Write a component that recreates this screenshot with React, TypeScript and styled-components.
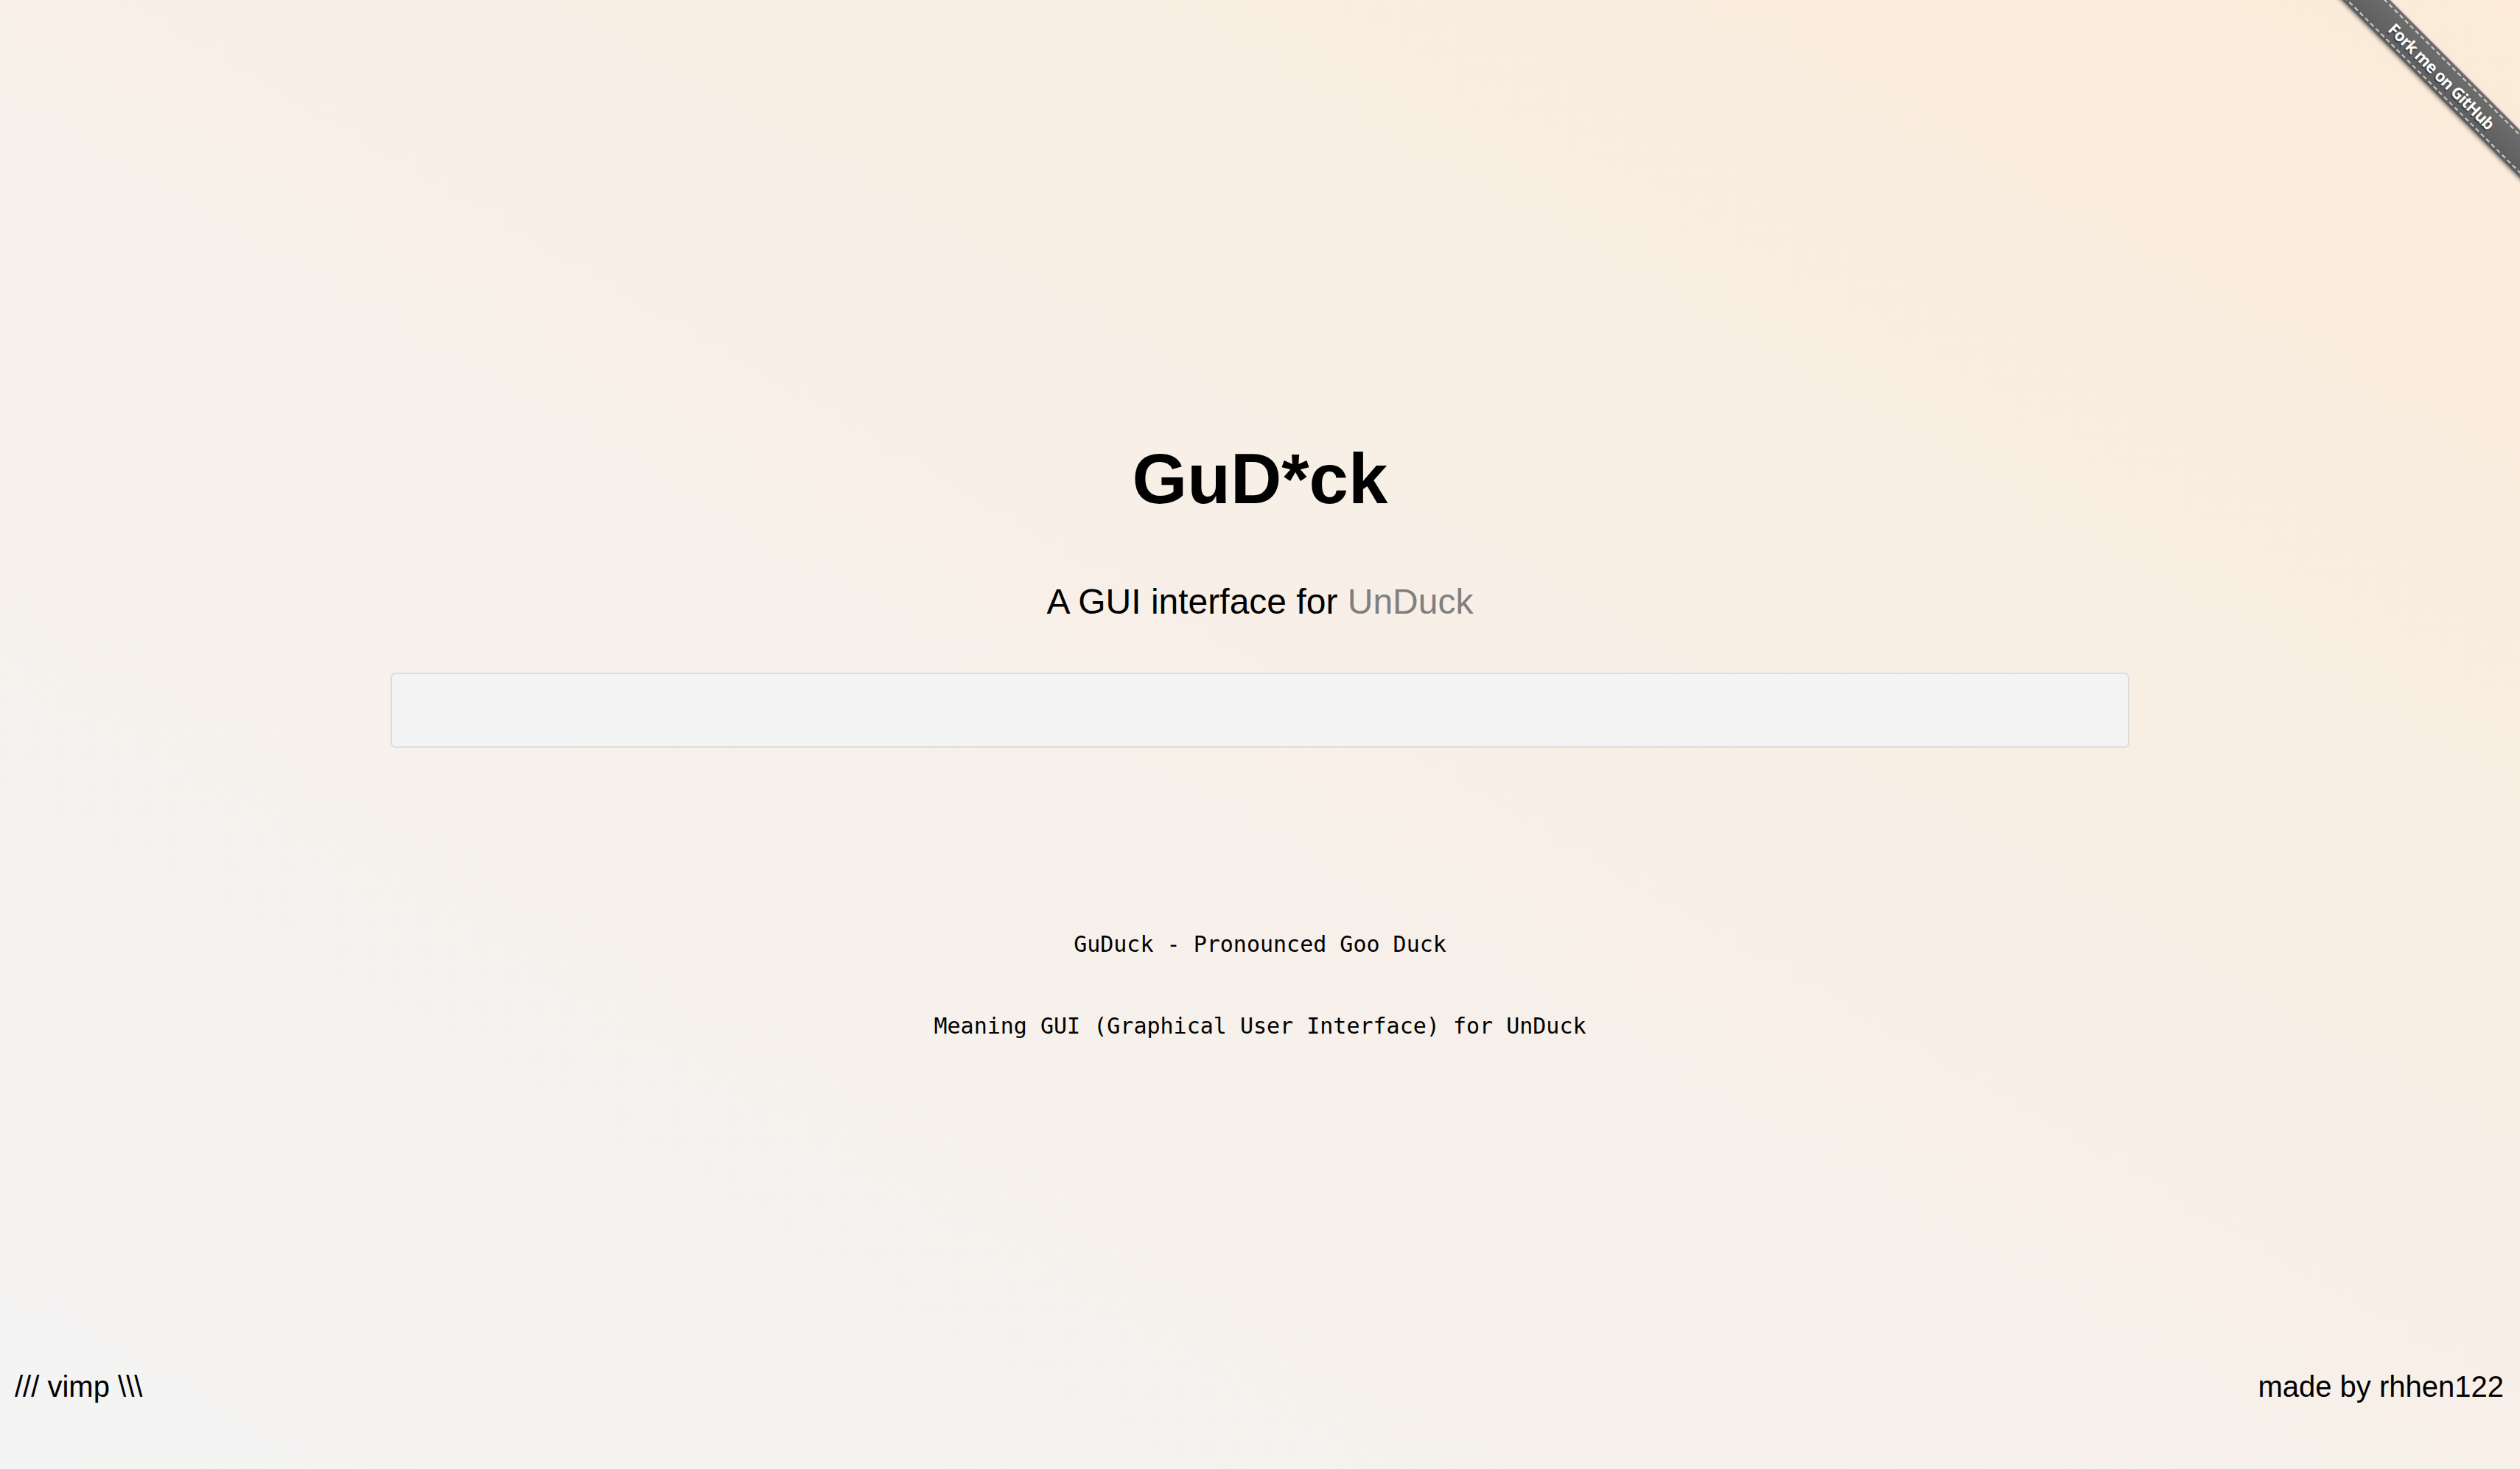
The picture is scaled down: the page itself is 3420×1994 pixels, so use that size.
import React from 'react';
import styled, { createGlobalStyle } from 'styled-components';

const GlobalStyle = createGlobalStyle`
  html, body {
    margin: 0;
    padding: 0;
  }
  body {
    font-family: "Liberation Sans", Arial, Helvetica, sans-serif;
    color: #000;
    background: linear-gradient(to top right, #f4f4f4 0%, #f7f0ea 45%, #f8eee3 70%, #fbebd8 100%);
    min-height: 100vh;
  }
`;

const Page = styled.div`
  min-height: 100vh;
  display: flex;
  flex-direction: column;
  position: relative;
  overflow: hidden;
`;

const Main = styled.main`
  flex: 1;
  display: flex;
  flex-direction: column;
  align-items: center;
  padding-top: 602px;
`;

const Title = styled.h1`
  margin: 0;
  font-size: 96px;
  line-height: 96px;
  font-weight: 700;
`;

const Subtitle = styled.p`
  margin: 95px 0 0;
  font-size: 48px;
  line-height: 48px;
`;

const Link = styled.a`
  color: #808080;
  text-decoration: none;
`;

const Search = styled.input`
  margin-top: 72px;
  width: 2360px;
  height: 102px;
  box-sizing: border-box;
  border: 2px solid #dcdcdc;
  border-radius: 7px;
  background: #f4f4f4;
  font-size: 40px;
  padding: 0 24px;
  outline: none;
  font-family: inherit;
`;

const Note = styled.p<{ $gap: number }>`
  margin: ${(p) => p.$gap}px 0 0;
  font-family: "DejaVu Sans Mono", Menlo, monospace;
  font-size: 30px;
  line-height: 30px;
`;

const Footer = styled.footer`
  display: flex;
  justify-content: space-between;
  padding: 0 22px 92px 20px;
  font-size: 40px;
  line-height: 40px;
`;

const RibbonWrap = styled.a`
  position: absolute;
  top: 0;
  right: 0;
  width: 298px;
  height: 298px;
  overflow: hidden;
  text-decoration: none;
`;

const RibbonBand = styled.div`
  position: absolute;
  left: -18px;
  top: 80px;
  width: 420px;
  height: 46px;
  box-sizing: border-box;
  padding: 4px 0;
  transform: rotate(45deg);
  background: linear-gradient(to bottom, #6e6e6e, #5e5e5e);
  box-shadow: 0 2px 5px rgba(0, 0, 0, 0.45);
`;

const RibbonStitch = styled.div`
  height: 38px;
  box-sizing: border-box;
  border-top: 2px dashed rgba(255, 255, 255, 0.7);
  border-bottom: 2px dashed rgba(255, 255, 255, 0.7);
  color: #fff;
  font-family: "Noto Sans", "Open Sans", sans-serif;
  font-weight: 700;
  font-size: 22px;
  letter-spacing: -0.8px;
  line-height: 34px;
  text-align: center;
  text-shadow: 0 2px 2px rgba(0, 0, 0, 0.55);
`;

export default function App() {
  return (
    <>
      <GlobalStyle />
      <Page>
        <Main>
          <Title>GuD*ck</Title>
          <Subtitle>
            A GUI interface for <Link href="#">UnDuck</Link>
          </Subtitle>
          <Search type="text" />
          <Note $gap={252}>GuDuck - Pronounced Goo Duck</Note>
          <Note $gap={81}>Meaning GUI (Graphical User Interface) for UnDuck</Note>
        </Main>
        <Footer>
          <span>/// vimp \\\</span>
          <span>made by rhhen122</span>
        </Footer>
        <RibbonWrap href="#">
          <RibbonBand>
            <RibbonStitch>Fork me on GitHub</RibbonStitch>
          </RibbonBand>
        </RibbonWrap>
      </Page>
    </>
  );
}
